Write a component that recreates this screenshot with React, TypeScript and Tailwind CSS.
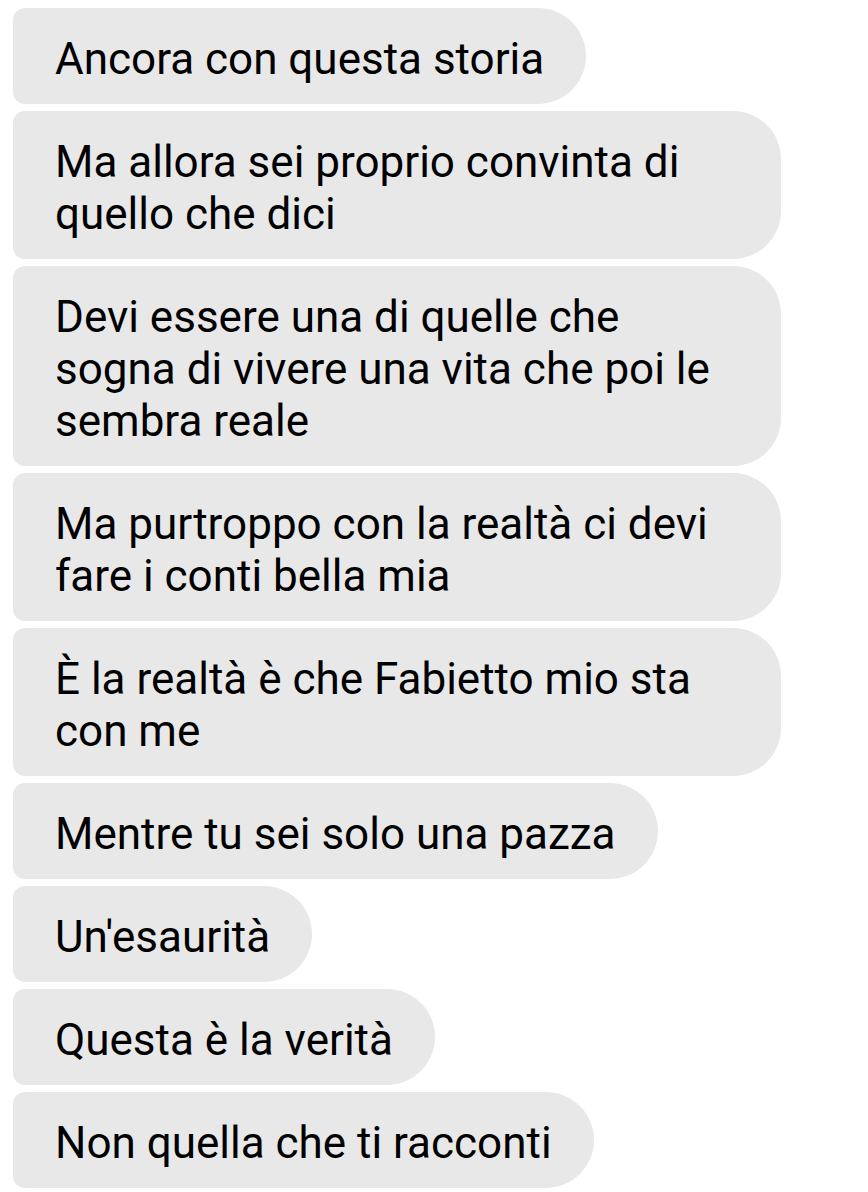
const MESSAGES = [
  'Ancora con questa storia',
  'Ma allora sei proprio convinta di quello che dici',
  'Devi essere una di quelle che sogna di vivere una vita che poi le sembra reale',
  'Ma purtroppo con la realtà ci devi fare i conti bella mia',
  'È la realtà è che Fabietto mio sta con me',
  'Mentre tu sei solo una pazza',
  "Un'esaurità",
  'Questa è la verità',
  'Non quella che ti racconti',
]

export default function App() {
  return (
    <div className="w-[868px] h-[1192px] bg-white overflow-hidden font-['Roboto',sans-serif]">
      <div className="flex flex-col items-start gap-[7px] pt-[8px] pl-[13px]">
        {MESSAGES.map((text, i) => (
          <div
            key={i}
            className="max-w-[768px] bg-[#e8e8e8] text-black text-[44px] leading-[52px] px-[42px] pt-[25px] pb-[19px] rounded-l-[12px] rounded-r-[48px]"
          >
            {text}
          </div>
        ))}
      </div>
    </div>
  )
}
